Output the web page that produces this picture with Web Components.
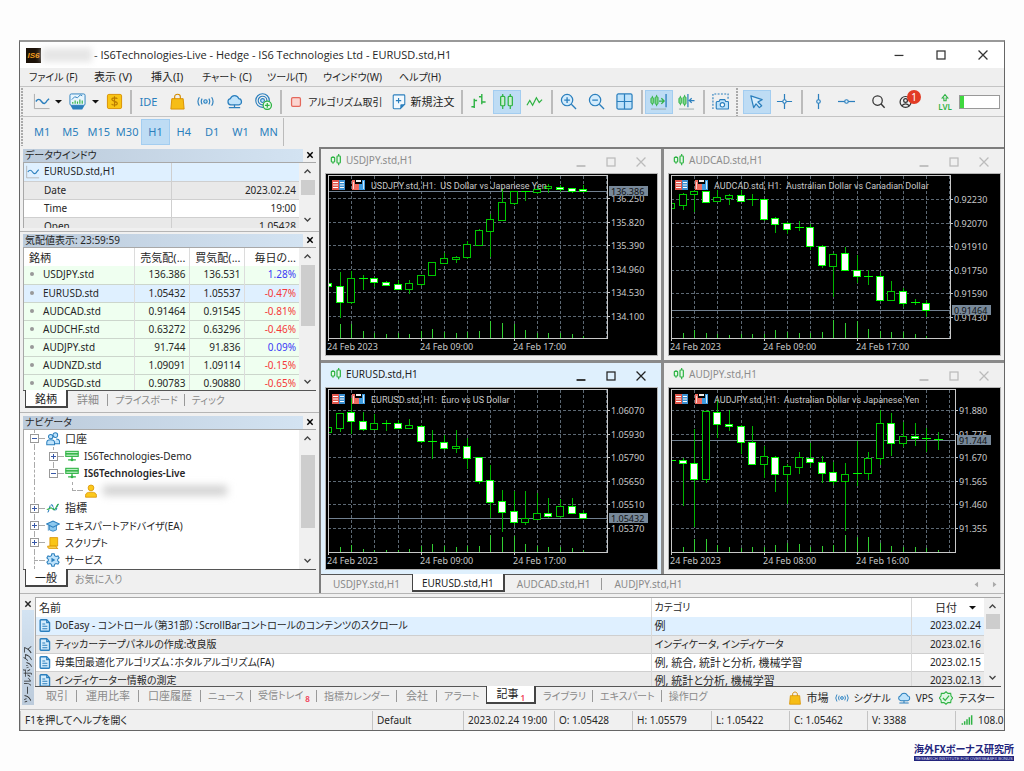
<!DOCTYPE html>
<html lang="ja">
<head>
<meta charset="utf-8">
<title>IS6Technologies-Live - Hedge - EURUSD.std,H1</title>
<style>
body{margin:0;background:#fdfdfd;font:10px/14px "Noto Sans","Noto Sans CJK JP",sans-serif;color:#262626}
</style>
</head>
<body>
<trade-terminal></trade-terminal>
<script>
const BASE = `<style>
*{box-sizing:border-box}
:host{display:block}
button,a,input{font:inherit;color:inherit;background:none;border:0;margin:0;padding:0;text-decoration:none;white-space:nowrap}
table{border-collapse:collapse;table-layout:fixed;width:100%}
th,td{font-weight:400;padding:0;white-space:nowrap;overflow:hidden}
.ja{font-size:11px;font-feature-settings:"palt"}
.kana{font-size:10px;font-feature-settings:"palt"}
</style>`;
function define(name, html, setup) {
  const t = document.createElement('template');
  t.innerHTML = BASE + html;
  customElements.define(name, class extends HTMLElement {
    constructor() {
      super();
      this.attachShadow({ mode: 'open' }).append(t.content.cloneNode(true));
    }
    connectedCallback() { if (setup) setup(this, this.shadowRoot); }
  });
}

/* ---------- icons, all on an 18 x 18 grid ---------- */
const B = '#2b7fbd', L = '#bfe3fb', G = '#2fb344';
const ICONS = {
  axis: `<path d="M1.500 1v15.500h16" stroke="#aaa" fill="none"/><path d="M3 9c2-3 4-3 6 0s4 3 6-1l2-2" stroke="${B}" stroke-width="1.500" fill="none"/>`,
  report: `<rect x="1" y="1" width="16" height="12" rx="1.500" fill="#e8f5fd" stroke="${B}"/><path d="M1.500 13h15l-2.500 4.500h-10z" fill="${B}"/><path d="M3 7l3-3 3 1 3-3 2 1" stroke="${B}" fill="none"/><path d="M4 11.500v-2M6.500 11.500V8M9 11.500V9M11.500 11.500V7M14 11.500V8" stroke="${G}" stroke-width="1.200"/>`,
  dollar: `<rect x="1.500" y="1.500" width="15" height="15" rx="1.500" fill="#f9c515" stroke="#d99100"/><path d="M12 6.200c-.5-1.200-5.800-1.800-5.800.8 0 2.300 5.800 1.400 5.800 3.900 0 2.600-5.600 2.200-6 .5M9 3.500v11" stroke="#b97a00" fill="none" stroke-width="1.200"/>`,
  bag: `<path d="M6 7V4c0-3.500 6-3.500 6 0v3" stroke="#d18a00" fill="none" stroke-width="1.200"/><path d="M3 6h12l1 11H2z" fill="#f6bd16" stroke="#d99100"/>`,
  signal: `<g stroke="${B}" fill="none" stroke-width="1.200"><circle cx="9" cy="9" r="1.800" fill="${L}"/><path d="M5.500 6q-2 3 0 6M12.500 6q2 3 0 6M2.500 4.500q-3 4.500 0 9M15.500 4.500q3 4.500 0 9"/></g>`,
  cloud: `<path d="M5 12.500a3.300 3.300 0 0 1-.3-6.500 4.600 4.600 0 0 1 8.800 0 3.300 3.300 0 0 1 .3 6.500z" fill="${L}" stroke="${B}" stroke-width="1.300"/><path d="M9 12.500v3M3 15.500h12" stroke="${B}" stroke-width="1.300"/>`,
  radar: `<g fill="none" stroke="${B}" stroke-width="1.200"><circle cx="8" cy="8" r="7.200"/><circle cx="8" cy="8" r="4.600"/><circle cx="8" cy="8" r="2" fill="${L}"/></g><circle cx="13" cy="13" r="4.400" fill="#eaf8ec" stroke="${G}" stroke-width="1.300"/><path d="M13 10.500v5M10.500 13h5" stroke="${G}" stroke-width="1.300"/>`,
  stop: `<rect x="4" y="4" width="10" height="10" rx="1.500" fill="#fbd5d0" stroke="#e4685c" stroke-width="1.400"/>`,
  order: `<path d="M3.500 1h11q1 0 1 1v9.500l-5 5h-7q-1 0-1-1V2q0-1 1-1z" fill="#f2f9fe" stroke="${B}" stroke-width="1.200"/><path d="M15.500 11.500l-5 5v-4q0-1 1-1z" fill="${B}"/><path d="M8.500 4.500v6M5.500 7.500h6" stroke="${B}" stroke-width="1.300"/>`,
  bars: `<path d="M4.500 6v10M1.500 14.500h3M4.500 8h3M12.500 1v11M9.500 4h3M12.500 9.500h4" stroke="${G}" stroke-width="1.500" fill="none"/>`,
  candles: `<g stroke="${G}" stroke-width="1.300" fill="#c9efcf"><path d="M5 1v16M13 1v16"/><rect x="2.800" y="3.500" width="4.400" height="10" rx="1"/><rect x="10.800" y="3.500" width="4.400" height="10" rx="1"/></g>`,
  pair: `<g stroke="${G}" stroke-width="1.800" fill="#e8f9ea"><path d="M4.500 3.500v11M13 0v17"/><rect x="2" y="5" width="5" height="7" rx="1"/><rect x="10.500" y="3" width="5" height="10.500" rx="1"/></g>`,
  zig: `<path d="M1 13l3-5 3 5 4-8 3 5 3-3" stroke="${G}" stroke-width="1.300" fill="none"/>`,
  zin: `<circle cx="7.500" cy="7.500" r="6" fill="#d4ecfc" stroke="${B}" stroke-width="1.300"/><path d="M12 12l5 5M4.500 7.500h6M7.500 4.500v6" stroke="${B}" stroke-width="1.400"/>`,
  zout: `<circle cx="7.500" cy="7.500" r="6" fill="#d4ecfc" stroke="${B}" stroke-width="1.300"/><path d="M12 12l5 5M4.500 7.500h6" stroke="${B}" stroke-width="1.400"/>`,
  tiles: `<rect x="1" y="1" width="16" height="16" rx="1.500" fill="${L}" stroke="${B}" stroke-width="1.300"/><path d="M9 1v16M1 9h16" stroke="${B}" stroke-width="1.300"/>`,
  scroll: `<g stroke="${G}" fill="#7fd48b"><path d="M2.500 3v10M7 2v12"/><rect x="1" y="5" width="3" height="6" rx="1"/><rect x="5.500" y="4" width="3" height="8" rx="1"/></g><path d="M9.500 8.500h5M12 5.500l3 3-3 3" stroke="${G}" stroke-width="1.300" fill="none"/><path d="M17 1v14" stroke="${B}" stroke-width="1.400"/><path d="M1 17h16" stroke="#9aa"/>`,
  shift: `<g stroke="${G}" fill="#7fd48b"><path d="M2.500 3v10M7 2v12"/><rect x="1" y="5" width="3" height="6" rx="1"/><rect x="5.500" y="4" width="3" height="8" rx="1"/></g><path d="M10.500 1v14M17.500 8h-5M14.500 5.500L12 8l2.500 2.500" stroke="${B}" stroke-width="1.300" fill="none"/><path d="M1 17h16" stroke="#9aa"/>`,
  camera: `<path d="M1 17V1h16v5" fill="none" stroke="${B}" stroke-dasharray="2 1.500" stroke-width="1.200"/><path d="M5.500 9h2l1-2h5l1 2h2q1 0 1 1v6q0 1-1 1h-11q-1 0-1-1v-6q0-1 1-1z" fill="${L}" stroke="${B}" stroke-width="1.200"/><circle cx="11" cy="12.500" r="2.300" fill="#fff" stroke="${B}" stroke-width="1.200"/>`,
  cursor: `<path d="M3 3l12 4-4.500 2.500 4 4-2.500 2-3.500-4-2.500 4z" fill="#d7edfc" stroke="${B}" stroke-width="1.300" stroke-linejoin="round"/>`,
  cross: `<path d="M9 1v16M1 9h16" stroke="${B}" stroke-width="1.300"/><circle cx="9" cy="9" r="1.800" fill="#fff" stroke="${B}" stroke-width="1.200"/>`,
  vline: `<path d="M9 1v16" stroke="${B}" stroke-width="1.300"/><circle cx="9" cy="9" r="1.900" fill="#dff0fb" stroke="${B}" stroke-width="1.200"/>`,
  hline: `<path d="M0 9h18" stroke="${B}" stroke-width="1.300"/><circle cx="9" cy="9" r="1.900" fill="#dff0fb" stroke="${B}" stroke-width="1.200"/>`,
  search: `<circle cx="8" cy="8" r="5" fill="none" stroke="#333" stroke-width="1.300"/><path d="M11.500 11.500l4 4" stroke="#333" stroke-width="1.500"/>`,
  user: `<circle cx="8" cy="9.500" r="5.800" fill="none" stroke="#333" stroke-width="1.300"/><circle cx="8" cy="8" r="2" fill="none" stroke="#333" stroke-width="1.300"/><path d="M4 13.500q4-4 8 0" fill="none" stroke="#333" stroke-width="1.300"/>`,
  up: `<path d="M9 3l5 6h-3v5H7V9H4z" fill="none" stroke="${G}" stroke-width="2"/>`,
  people: `<g stroke="${B}" stroke-width="1.300" fill="${L}"><circle cx="12" cy="4" r="3"/><path d="M10 15h7.500v-2q0-4-4.500-4"/><circle cx="6" cy="6" r="2.800"/><path d="M1 16.500v-3q0-3.500 5-3.500t5 3.500v3z"/></g>`,
  server: `<g fill="#bdf0c6" stroke="${G}" stroke-width="1.400"><rect x="1" y="3" width="16" height="3"/><rect x="1" y="6.500" width="16" height="3"/></g><path d="M9 9.500v5M4 14h10" stroke="${G}" stroke-width="1.600"/><circle cx="9" cy="14" r="1.700" fill="${G}"/>`,
  person: `<g fill="#fbc81c" stroke="#d99100"><circle cx="9" cy="5" r="3.700"/><path d="M2 17v-2.500q0-4 7-4t7 4V17z"/></g>`,
  wave: `<path d="M2 14c2 1 2-9 5-9s2 8 5 7 1-7 5-8" stroke="${B}" fill="none" stroke-width="1.400" stroke-dasharray="4 1"/><path d="M1 11c3 0 4-3 6-2s3 4 5 1 2-5 4-6" stroke="${G}" fill="none" stroke-width="1.400"/>`,
  hat: `<path d="M4.500 8v6q4.500 3.500 9 0V8" fill="#8cc8ee" stroke="${B}"/><path d="M.8 6.500L9 2.500l8.200 4L9 10.500z" fill="#8cc8ee" stroke="${B}" stroke-width="1.300"/><path d="M3 8v7" stroke="${B}"/>`,
  script: `<path d="M5 2h10v11H5z" fill="#f9c515" stroke="#d99100"/><path d="M2 13h11q0 3 2.500 3H4q-2 0-2-3z" fill="#fbd34a" stroke="#d99100"/>`,
  gear: `<path d="M7.500 1h3l.6 2.500 1.800 1 2.500-.7 1.500 2.600L15 8.200v1.800l1.900 1.700-1.500 2.600-2.500-.7-1.800 1-.6 2.400h-3l-.6-2.400-1.800-1-2.500.7-1.500-2.600L3 10V8.200L1.100 6.400l1.500-2.600 2.500.7 1.800-1z" fill="${L}" stroke="${B}" stroke-width="1.300"/><path d="M7 6l5 3-5 3z" fill="${B}"/>`,
  doc: `<path d="M4 1h8l4 4v11q0 1-1 1H4q-1 0-1-1V2q0-1 1-1z" fill="#d4ecfc" stroke="${B}" stroke-width="1.900" stroke-linejoin="round"/><path d="M12 1v4h4M6 7h4M6 10h7M6 13.500h7" stroke="${B}" stroke-width="1.500" fill="none"/>`,
  tester: `<path d="M9 1l2.500 2 3.500 0 .5 3.500 2 2.500-2 2.500L15 15h-3.500L9 17l-2.500-2H3l-.5-3.500L.5 9l2-2.500L3 3h3.500z" fill="#dff7e3" stroke="${G}" stroke-width="1.400"/><path d="M5 9l3 3 5-6" fill="none" stroke="${G}" stroke-width="1.600"/>`,
  meter: `<path d="M2 16v-2M5.500 16v-5M9 16V8M12.500 16V5M16 16V2" stroke="${G}" stroke-width="2.200"/>`,
  caret: `<path d="M0 5h18l-9 9z" fill="#111"/>`,
  min: `<path d="M4 9.500h10" stroke="currentColor" stroke-width="1.400"/>`,
  low: `<path d="M4 13.500h10" stroke="currentColor" stroke-width="2"/>`,
  max: `<rect x="4.500" y="4.500" width="9" height="9" fill="none" stroke="currentColor" stroke-width="1.400"/>`,
  close: `<path d="M4 4l10 10M14 4L4 14" stroke="currentColor" stroke-width="1.400"/>`,
  shut: `<path d="M5 5l8 8M13 5l-8 8" stroke="currentColor" stroke-width="2.200"/>`,
  chevup: `<path d="M3 12l6-6 6 6" stroke="#444" stroke-width="2.600" fill="none"/>`,
  chevdown: `<path d="M3 6l6 6 6-6" stroke="#444" stroke-width="2.600" fill="none"/>`,
  left: `<path d="M13 2v14L4 9z" fill="#aaa"/>`, right: `<path d="M5 2v14l9-7z" fill="#aaa"/>`
};
define('ui-icon', `<style>:host{display:inline-block;width:16px;height:16px;flex:none}svg{display:block;width:100%;height:100%}</style><svg viewBox="0 0 18 18" aria-hidden="true"></svg>`,
  (el, r) => { r.querySelector('svg').innerHTML = ICONS[el.getAttribute('name')] || ''; });

define('tool-button', `<style>
:host{flex:0 0 28px;height:24px}
button{width:100%;height:100%;display:flex;align-items:center;justify-content:center;gap:4px;border:1px solid transparent;color:#2b7fbd}
:host([on]) button{background:#bedcf4;border-color:#a3cdf0}
:host([wide]){flex:none}
:host([wide]) button{color:#262626;padding:0 3px}
button ui-icon{width:17px;height:17px}
:host([wide]) button ui-icon{width:16px;height:16px}
</style><button type="button"><ui-icon></ui-icon><slot></slot></button>`, (el, r) => {
  const n = el.getAttribute('icon'), i = r.querySelector('ui-icon');
  if (!n) { i.remove(); return; }
  const c = document.createElement('ui-icon');
  c.setAttribute('name', n);
  if (n === 'caret') c.style.cssText = 'width:7px;height:7px';
  i.replaceWith(c);
  if (!el.textContent.trim()) r.querySelector('button').setAttribute('aria-label', n);
});

define('title-bar', `<style>
:host{display:flex;height:26px;align-items:center;background:#fff;padding-left:6px}
.logo{width:15px;height:15px;background:#1c1208;color:#f39a1c;font:italic bold 8px/15px "Liberation Sans",sans-serif;text-align:center}
.id{width:50px;height:14px;margin:0 2px 0 1px;background:#e6e6e6;filter:blur(3px)}
h1{font:11px/14px "Open Sans",sans-serif;margin:0;flex:1;white-space:nowrap}
button{width:42px;height:24px;display:flex;align-items:center;justify-content:center;color:#333}
</style><span class="logo">IS6</span><span class="id"></span>
<h1>- IS6Technologies-Live - Hedge - IS6 Technologies Ltd - EURUSD.std,H1</h1>
<button aria-label="最小化"><ui-icon name="min"></ui-icon></button><button aria-label="最大化"><ui-icon name="max"></ui-icon></button><button aria-label="閉じる"><ui-icon name="close"></ui-icon></button>`);

define('menu-bar', `<style>
:host{background:#efefef;height:19px;padding-left:9px;border-bottom:1px solid #c4c4c4}
nav{display:grid;grid-template-columns:65px 57px 51px 65px 56px 76px 60px;line-height:18px}
button{text-align:left}
</style><nav class="kana"><button>ファイル (F)</button><button class="ja">表示 (V)</button><button class="ja">挿入(I)</button><button>チャート (C)</button><button>ツール(T)</button><button>ウインドウ(W)</button><button>ヘルプ(H)</button></nav>`);

define('tool-bar', `<style>
:host{display:flex;align-items:center;height:30px;background:#f0f0f0;border-bottom:1px solid #c4c4c4}
.grip{width:7px;height:28px;margin-left:1px;background:radial-gradient(circle at 1px 1px,#aaa 1px,transparent 1px) 0 0/3px 3px repeat-y}
i{flex:none;width:2px;height:24px;margin:0 2px;background:#bbb}
.five{display:flex;width:144px}.five tool-button{flex:1}
.a{flex:0 0 26px}.c{flex:0 0 9px}
.sp{flex:1}
.user{position:relative;width:36px;display:flex;margin-right:3px}
.badge{position:absolute;left:15px;top:0;width:14px;height:14px;border-radius:7px;background:#e23b24;color:#fff;text-align:center;line-height:14px;font-size:10px}
.lvl{width:28px;display:flex;flex-direction:column;align-items:center;color:#2fb344;font-size:8px;line-height:8px;font-weight:600}
.lvl ui-icon{width:10px;height:10px}
.bat{width:41px;height:14px;margin-right:4px;border:1px solid #999;background:linear-gradient(90deg,#3fd83f 4px,#fff 4px)}
</style><span class="grip"></span>
<tool-button class="a" icon="axis"></tool-button><tool-button class="c" icon="caret"></tool-button>
<tool-button icon="report"></tool-button><tool-button class="c" icon="caret"></tool-button>
<tool-button icon="dollar"></tool-button><i></i>
<span class="five"><tool-button><span style="font-size:11px">IDE</span></tool-button><tool-button icon="bag"></tool-button><tool-button icon="signal"></tool-button><tool-button icon="cloud"></tool-button><tool-button icon="radar"></tool-button></span><i></i>
<tool-button wide icon="stop" class="kana">アルゴリズム取引</tool-button><tool-button wide icon="order" class="ja">新規注文</tool-button><i></i>
<tool-button icon="bars"></tool-button><tool-button on icon="candles"></tool-button><tool-button icon="zig"></tool-button><i></i>
<tool-button icon="zin"></tool-button><tool-button icon="zout"></tool-button><tool-button icon="tiles"></tool-button><i></i>
<tool-button on icon="scroll"></tool-button><tool-button icon="shift"></tool-button><i></i>
<tool-button icon="camera"></tool-button><span class="grip"></span>
<tool-button on icon="cursor"></tool-button><tool-button icon="cross"></tool-button><i></i>
<tool-button icon="vline"></tool-button><tool-button icon="hline"></tool-button><span class="sp"></span>
<tool-button icon="search"></tool-button><span class="user"><tool-button icon="user"></tool-button><span class="badge">1</span></span>
<span class="lvl"><ui-icon name="up"></ui-icon>LVL</span><span class="bat"></span>`);

define('time-frames', `<style>
:host{display:flex;align-items:center;height:30px;background:#f0f0f0}
.grip{width:7px;height:28px;margin-left:1px;background:radial-gradient(circle at 1px 1px,#aaa 1px,transparent 1px) 0 0/3px 3px repeat-y}
div{display:flex;width:255px;height:28px;align-items:center}div+i{width:1px;height:28px;background:#bbb}
tool-button{flex:1;height:26px;font-size:11px}
</style><span class="grip"></span><div></div><i></i>`, (el, r) => {
  r.querySelector('div').innerHTML = 'M1 M5 M15 M30 H1 H4 D1 W1 MN'.split(' ').map(t => `<tool-button${t === 'H1' ? ' on' : ''}>${t}</tool-button>`).join('');
});

define('scroll-rail', `<style>
:host{width:17px;flex:none;background:#f0f0f0;display:flex;flex-direction:column;align-items:center;padding:4px 0}
ui-icon{width:9px;height:9px}
b{width:14px;margin-top:var(--gap,4px);height:var(--thumb,15px);background:#cdcdcd}
ui-icon:last-child{margin-top:auto}
</style><ui-icon name="chevup"></ui-icon><b></b><ui-icon name="chevdown"></ui-icon>`);

define('tab-strip', `<style>:host{display:flex;height:19px;padding-left:var(--inset,2px);border-top:1px solid var(--line,#555)}</style><slot></slot>`);
define('tab-item', `<style>
:host{display:flex;flex:none;height:17px}
button{padding:0 var(--pad,9px);color:#8a8a8a;position:relative}
:host([kana]) button{padding:0 7px;font-size:10px}
:host([sep]) button::after{content:"";position:absolute;right:0;top:3px;height:12px;border-right:1px solid #999}
:host([selected]){height:18px;margin-top:-1px;background:#fff;border:solid #444;border-width:0 2px 2px 1px}
:host([selected]) button{color:#222;padding-top:1px}
sub{color:#f0364f;font-weight:600;font-size:8px;line-height:8px;vertical-align:-3px;margin-left:2px}
</style><button type="button" role="tab"><slot></slot></button>`, (el, r) => {
  const b = el.getAttribute('badge');
  if (b) { const s = document.createElement('sub'); s.textContent = b; r.querySelector('button').append(s); }
});

define('dock-panel', `<style>
:host{padding:1px 3px 3px;border-bottom:1px solid #b5b5b5;background:#f0f0f0}
header{display:flex;height:14px;align-items:center}
h2{flex:1;margin:0;font-weight:400;font-size:10px;line-height:13px;height:13px;padding-left:2px;background:linear-gradient(90deg,#bccbdb,#d3e3f2)}
header button{width:13px;height:13px;display:grid;place-items:center;color:#000}
header ui-icon{width:12px;height:12px}
.b{display:flex;border:solid #a8a8a8;border-width:1px 0 0 1px;height:var(--h);background:#fff;overflow:hidden}
.m{flex:1;min-width:0;overflow:hidden}
</style><header><h2 class="kana"><slot name="title"></slot></h2><button aria-label="閉じる"><ui-icon name="shut"></ui-icon></button></header>
<div class="b"><div class="m"><slot></slot></div><scroll-rail></scroll-rail></div><slot name="tabs"></slot>`);

define('data-window', `<style>
tr{height:18px;border-bottom:1px solid #cfcfcf}
td,th{line-height:17px;text-align:right;padding-right:3px}
th{text-align:left;padding-left:20px;border-right:1px solid #cfcfcf;position:relative}
th ui-icon{position:absolute;left:1px;top:2px;width:15px;height:14px}
tr:nth-child(even){background:#e9e9e9}tr:first-child{background:#dff0ff}
</style><table><colgroup><col style="width:147px"><col></colgroup>
<tr><th scope="row"><ui-icon name="axis"></ui-icon>EURUSD.std,H1</th><td></td></tr><tr><th scope="row">Date</th><td>2023.02.24</td></tr>
<tr><th scope="row">Time</th><td>19:00</td></tr><tr><th scope="row">Open</th><td>1.05428</td></tr></table>`);

define('market-watch', `<style>
tr{height:18px}tbody tr{background:#effff0;border-bottom:1px solid #ccd6cc}
td,th{line-height:17px;text-align:right;padding-right:3px;border-right:1px solid #dcdcdc}
td:last-child,th:last-child{border-right:0}
td:first-child,th:first-child{text-align:left}th:first-child{padding-left:5px}
tbody .sel{background:#dff0ff}.up{color:#3a3af5}.dn{color:#f53a3a}
td:first-child::before{content:"";display:inline-block;width:4px;height:4px;border-radius:2px;background:#999;margin:0 9px 2px 6px}
</style><table><colgroup><col><col style="width:55px"><col style="width:55px"><col style="width:55px"></colgroup>
<thead class="ja"><tr><th>銘柄</th><th>売気配(...</th><th>買気配(...</th><th>毎日の...</th></tr></thead><tbody></tbody></table>`, (el, r) => {
  r.querySelector('tbody').innerHTML = [
    ['USDJPY.std', '136.386', '136.531', '1.28%'], ['EURUSD.std', '1.05432', '1.05537', '-0.47%'],
    ['AUDCAD.std', '0.91464', '0.91545', '-0.81%'], ['AUDCHF.std', '0.63272', '0.63296', '-0.46%'],
    ['AUDJPY.std', '91.744', '91.836', '0.09%'], ['AUDNZD.std', '1.09091', '1.09114', '-0.15%'],
    ['AUDSGD.std', '0.90783', '0.90880', '-0.65%']
  ].map(([s, a, b, c], i) => `<tr${i === 1 ? ' class="sel"' : ''}><td>${s}</td><td>${a}</td><td>${b}</td><td class="${c[0] === '-' ? 'dn' : 'up'}">${c}</td></tr>`).join('');
});

define('nav-tree', `<style>
:host{height:100%}
ul{list-style:none;margin:0;padding:0;height:139px;display:flex;flex-direction:column}
li{flex:1;display:flex;align-items:center;padding-left:calc(6px + var(--d,0) * 19px);position:relative}
li::before{content:"";position:absolute;left:calc(10px + var(--d,0) * 19px);top:0;bottom:0;border-left:1px dashed #aaa}
li.end::before{bottom:50%}
li.deep::after{content:"";position:absolute;left:10px;top:0;bottom:0;border-left:1px dashed #aaa}
u{width:9px;height:9px;border:1px solid #999;background:#fff;position:relative;flex:none;z-index:1}
u::before{content:"";position:absolute;left:1px;right:1px;top:3px;border-top:1px solid #3758a8}
u.p::after{content:"";position:absolute;top:1px;bottom:1px;left:3px;border-left:1px solid #3758a8}
u.n{border-color:transparent;background:none}u.n::before{left:3px;right:0;border-top:1px dashed #aaa}
s{width:6px;border-top:1px dashed #aaa;margin-right:1px}
ui-icon{width:14px;height:14px;margin-right:5px}
.blur{width:124px;height:9px;background:#ccc;filter:blur(4px)}
b{font-weight:600}
</style><ul>
<li><u></u><s></s><ui-icon name="people"></ui-icon><span class="ja">口座</span></li>
<li style="--d:1" class="deep"><u class="p"></u><s></s><ui-icon name="server"></ui-icon>IS6Technologies-Demo</li>
<li style="--d:1" class="end deep"><u></u><s></s><ui-icon name="server"></ui-icon><b>IS6Technologies-Live</b></li>
<li style="--d:2" class="end deep"><u class="n"></u><s></s><ui-icon name="person"></ui-icon><span class="blur"></span></li>
<li><u class="p"></u><s></s><ui-icon name="wave"></ui-icon><span class="ja">指標</span></li>
<li><u class="p"></u><s></s><ui-icon name="hat"></ui-icon><span class="kana">エキスパートアドバイザ(EA)</span></li>
<li><u class="p"></u><s></s><ui-icon name="script"></ui-icon><span class="kana">スクリプト</span></li>
<li><u class="n"></u><s></s><ui-icon name="gear"></ui-icon><span class="kana">サービス</span></li></ul>`);

/* Candles: high, low, body top, body bottom, 1 when the bar closed lower, tick volume. */
const CHARTS = {
  USDJPY: { name: 'US Dollar vs Japanese Yen', right: 281, tick: 24, labels: ['136.250', '135.820', '135.390', '134.960', '134.530', '134.100'], price: ['136.386', 17], times: ['09:00', '17:00'],
    bars: '109,113,109,112,1,0 98,144,112,128,1,14 97,130,104,128,0,14 101,116,104,105,0,7 103,113,104,108,1,5 107,111,108,111,1,4 106,116,110,115,1,5 106,120,109,115,0,4 101,112,101,110,0,7 88,101,88,101,0,9 79,90,84,89,0,6 82,89,83,85,0,5 67,85,70,83,0,6 55,71,56,71,0,7 40,83,45,57,0,17 15,46,28,46,0,15 17,31,17,29,0,14 17,27,17,18,0,8 12,20,15,18,0,5 10,19,12,14,0,5 11,18,13,15,1,5 14,19,14,17,1,4 11,18,15,17,1,2' },
  AUDCAD: { name: 'Australian Dollar vs Canadian Dollar', right: 281, tick: 25, labels: ['0.92230', '0.92070', '0.91910', '0.91750', '0.91590', '0.91430'], price: ['0.91464', 136], times: ['09:00', '17:00'],
    bars: '29,34,29,34,0,0 19,36,20,31,0,5 16,38,17,20,0,8 17,28,17,28,1,5 16,28,23,27,0,4 20,31,21,24,0,3 16,27,21,27,1,4 20,32,25,26,0,4 25,47,25,45,1,4 43,59,44,50,1,8 48,60,49,55,1,6 47,57,53,54,0,5 50,76,53,72,1,5 71,94,72,91,1,6 79,123,80,92,0,18 73,97,79,96,1,15 81,109,96,102,1,17 96,111,102,103,0,9 98,127,102,126,1,7 107,126,117,126,0,6 114,133,117,129,1,6 125,131,128,129,0,4 126,143,129,136,1,2' },
  EURUSD: { name: 'Euro vs US Dollar', right: 281, tick: 22, labels: ['1.06070', '1.05930', '1.05790', '1.05650', '1.05510', '1.05370'], price: ['1.05432', 130], times: ['09:00', '17:00'],
    bars: '39,44,39,44,0,0 25,44,25,40,0,5 10,46,24,33,1,7 24,43,33,41,1,3 26,41,35,41,0,2 32,43,35,36,0,2 32,40,35,40,1,2 31,41,37,40,0,3 37,55,38,53,1,6 42,71,53,54,0,8 47,62,54,60,1,6 42,65,58,60,0,5 50,81,58,70,1,6 69,96,69,93,1,6 77,130,92,114,1,17 102,144,113,124,1,15 103,137,123,134,1,16 103,137,130,134,0,8 105,132,125,131,0,6 110,130,125,128,1,5 111,130,118,128,0,5 110,126,118,125,1,4 122,131,125,130,1,2' },
  AUDJPY: { name: 'Australian Dollar vs Japanese Yen', right: 286, tick: 22, labels: ['91.880', '91.775', '91.670', '91.565', '91.460', '91.355'], price: ['91.744', 52], times: ['08:00', '16:00'],
    bars: '72,73,72,73,0,0 70,118,72,75,1,5 41,139,75,91,1,13 22,95,23,91,0,13 11,50,24,36,1,7 22,43,36,38,1,5 37,66,38,54,1,4 38,77,54,76,1,5 58,90,68,76,0,5 68,104,69,86,1,7 76,116,78,86,0,9 64,86,69,79,0,8 55,79,70,74,1,5 68,95,74,85,1,6 74,97,84,93,1,7 75,143,86,93,0,17 53,98,85,86,0,15 64,92,70,85,0,15 22,77,35,70,0,9 25,68,35,55,1,6 34,59,48,55,0,5 35,58,48,50,1,5 40,64,50,51,1,4 44,62,51,52,0,2' }
};
define('chart-window', `<style>
:host{background:#f0f0f0;padding:0 4px 5px 5px;min-width:0;color:#8c8c8c}
:host([active]){background:#dff0fd;color:#222}
header{display:flex;height:25px;align-items:center;padding-left:4px}
header>ui-icon{width:12px;height:12px;margin-bottom:4px}h3{flex:1;margin:0 0 0 4px;padding-bottom:4px;font:inherit}
button{width:30px;height:20px;display:grid;place-items:center;color:#bbb}
:host([active]) button{color:#222}
button ui-icon{width:16px;height:16px}
header button:last-child{margin-right:1px}
svg{display:block;width:100%;height:181px;background:#000;outline:1px solid #b5b5b5;font-size:9px}
.name{font-family:Roboto,sans-serif}
</style><header><ui-icon name="pair"></ui-icon><h3></h3><button aria-label="最小化"><ui-icon name="low"></ui-icon></button><button aria-label="最大化"><ui-icon name="max"></ui-icon></button><button aria-label="閉じる"><ui-icon name="close"></ui-icon></button></header><svg role="img"></svg>`, (el, r) => {
  const s = el.getAttribute('symbol'), c = CHARTS[s], R = c.right;
  r.querySelector('h3').textContent = s + '.std,H1';
  const X = k => Math.round(2 + 11.6 * k), rows = c.labels.map((t, i) => Math.round(c.tick + 23.5 * i));
  let g = '<g stroke="#5c6873" stroke-dasharray="3 2" shape-rendering="crispEdges">';
  for (let k = 2; X(k) < R; k += 2) g += `<path d="M${X(k) + .5} 2V164"/>`;
  rows.forEach(y => g += `<path d="M2 ${y + .5}H${R}"/>`);
  g += `</g><path d="M2 ${c.price[1] + .5}H${R}" stroke="#718090"/><g shape-rendering="crispEdges">`;
  c.bars.split(' ').forEach((b, k) => {
    const [h, l, t, m, d, v] = b.split(',').map(Number), x = X(k), w = k ? 4 : 0, h2 = Math.max(m - t, 1);
    if (v) g += `<rect x="${x}" y="${164 - v}" width="1" height="${v}" fill="#32cd32"/>`;
    g += `<rect x="${x}" y="${h}" width="1" height="${l - h}" fill="#00b400"/>`;
    if (m - t <= 1) g += `<rect x="${x - w}" y="${t}" width="${w + 5}" height="1" fill="#00ff00"/>`;
    else g += `<rect x="${x - w + .5}" y="${t + .5}" width="${w + 3}" height="${h2}" fill="${d ? '#fff' : '#000'}" stroke="${d ? '#00ff00' : '#00c800'}"/>`;
  });
  g += `<rect x="2.500" y="1.500" width="${R - 2}" height="163" fill="none" stroke="#c8c8c8"/></g><g fill="#c8c8c8">`;
  rows.forEach((y, i) => g += `<path d="M${R} ${y + .5}h3" stroke="#c8c8c8"/><text x="${R + 4}" y="${y + 4}">${c.labels[i]}</text>`);
  g += `<path d="M2.500 164v3M95.500 164v3M188.500 164v3" stroke="#c8c8c8"/><text x="1" y="176">24 Feb 2023</text><text x="94" y="176">24 Feb ${c.times[0]}</text><text x="187" y="176">24 Feb ${c.times[1]}</text><text class="name" x="45" y="15" xml:space="preserve">${s}.std, H1:  ${c.name}</text></g>`;
  g += `<rect x="${R + 2}" y="${c.price[1] - 5}" width="${R > 281 ? 34 : 39}" height="10" fill="#778899"/><text x="${R + 4}" y="${c.price[1] + 4}" fill="#111">${c.price[0]}</text>`;
  g += '<path d="M6 6h7v10H6z" fill="#e0574c"/><path d="M13 6h6v10h-6z" fill="#3c8fd0"/><path d="M7 8.500h5M7 11h5M7 13.500h5M14 8.500h4M14 11h4M14 13.500h4" stroke="#fff"/><path d="M26 6h3v4h4v6h-7z" fill="#ee6b60"/><path d="M39 6h-3v4h-3v6h6z" fill="#3c9be0"/><path d="M30 6h5v2h-5z" fill="#eee"/><path d="M27.500 8v7" stroke="#fbd5d0"/><path d="M37.500 7v8" stroke="#cde8fb"/>';
  const svg = r.querySelector('svg'); svg.innerHTML = g; svg.setAttribute('aria-label', s);
});

define('chart-desk', `<style>
:host{border:solid #7d7d7d;border-width:2px 0 0 2px;background:#f0f0f0;min-width:0}
.g{display:grid;grid-template-columns:1fr 1fr;gap:3px;background:#8a8a8a}
.t{display:flex;border-top:1px solid #555}
tab-strip{flex:1;height:18px;--inset:0px;--line:transparent;margin-top:-1px}
.t ui-icon{width:7px;height:7px;margin:6px 6px 0 5px}
</style><div class="g"><chart-window symbol="USDJPY"></chart-window><chart-window symbol="AUDCAD"></chart-window><chart-window symbol="EURUSD" active></chart-window><chart-window symbol="AUDJPY"></chart-window></div>
<div class="t"><tab-strip style="--pad:12px"><tab-item>USDJPY.std,H1</tab-item><tab-item selected style="--pad:9px">EURUSD.std,H1</tab-item><tab-item sep>AUDCAD.std,H1</tab-item><tab-item>AUDJPY.std,H1</tab-item></tab-strip><ui-icon name="left"></ui-icon><ui-icon name="right"></ui-icon></div>`);

define('tool-box', `<style>
:host{display:flex;padding:3px 3px 4px 1px;border-top:1px solid #b5b5b5;border-bottom:1px solid #c4c4c4;background:#f0f0f0}
.side{width:14px;flex:none;display:flex;flex-direction:column;align-items:center}
.side button{height:13px}.side ui-icon{width:12px;height:12px;display:block}
h2{flex:1;width:12px;margin:0;padding-top:2px;font-weight:400;font-size:9px;line-height:12px;font-feature-settings:"palt";writing-mode:vertical-rl;text-orientation:sideways;transform:rotate(180deg);background:linear-gradient(180deg,#bccbdb,#d3e3f2);white-space:nowrap}
.main{flex:1;min-width:0}
.tb{display:flex;height:89px;background:#fff;border:solid #a8a8a8;border-width:1px 0 0 1px;overflow:hidden}
.tb>div{flex:1;overflow:hidden}
tr{height:18px}thead tr{height:19px}tbody tr{border-bottom:1px solid #cfcfcf}
th,td{text-align:left;line-height:17px;padding-left:3px;border-right:1px solid #d8d8d8}
td:first-child{padding-left:2px;font-size:10px}td ui-icon{width:13px;height:13px;vertical-align:-3px;margin-right:4px}
th:last-child,td:last-child{text-align:right;border-right:0;padding-right:3px;font-size:10px}
th:last-child{font-size:11px;padding-right:8px}th ui-icon{width:7px;height:7px;margin-left:12px;vertical-align:1px}
tbody tr:nth-child(even){background:#e9e9e9}tbody tr:first-child{background:#dff0ff}
.f{display:flex}tab-strip{flex:1}
.r{display:flex;align-items:center;border-top:1px solid #555;padding:4px 6px 0 0;gap:6px}
.r a{display:flex;align-items:center;gap:5px;height:14px;white-space:nowrap}.r ui-icon{width:14px;height:14px}
</style><div class="side"><button aria-label="閉じる"><ui-icon name="shut"></ui-icon></button><h2>ツールボックス</h2></div>
<div class="main"><div class="tb"><div class="ja"><table><colgroup><col><col style="width:260px"><col style="width:73px"></colgroup>
<thead><tr><th>名前</th><th class="kana">カテゴリ</th><th>日付<ui-icon name="caret"></ui-icon></th></tr></thead>
<tbody><tr><td><ui-icon name="doc"></ui-icon>DoEasy - コントロール（第31部）：ScrollBarコントロールのコンテンツのスクロール</td><td>例</td><td>2023.02.24</td></tr>
<tr><td><ui-icon name="doc"></ui-icon>ティッカーテープパネルの作成:改良版</td><td class="kana">インディケータ, インディケータ</td><td>2023.02.16</td></tr>
<tr><td><ui-icon name="doc"></ui-icon>母集団最適化アルゴリズム：ホタルアルゴリズム(FA)</td><td>例, 統合, 統計と分析, 機械学習</td><td>2023.02.15</td></tr>
<tr><td><ui-icon name="doc"></ui-icon>インディケーター情報の測定</td><td>例, 統計と分析, 機械学習</td><td>2023.02.13</td></tr></tbody></table></div><scroll-rail style="--gap:3px"></scroll-rail></div>
<div class="f"><tab-strip class="ja" role="tablist"><tab-item sep>取引</tab-item><tab-item sep>運用比率</tab-item><tab-item sep>口座履歴</tab-item><tab-item kana sep>ニュース</tab-item><tab-item kana sep badge="8">受信トレイ</tab-item><tab-item kana sep>指標カレンダー</tab-item><tab-item sep>会社</tab-item><tab-item kana>アラート</tab-item><tab-item selected badge="1">記事</tab-item><tab-item kana sep>ライブラリ</tab-item><tab-item kana sep>エキスパート</tab-item><tab-item kana>操作ログ</tab-item></tab-strip>
<div class="r ja"><a href="#"><ui-icon name="bag"></ui-icon>市場</a><a href="#" class="kana"><ui-icon name="signal"></ui-icon>シグナル</a><a href="#" class="kana"><ui-icon name="cloud"></ui-icon>VPS</a><a href="#" class="kana"><ui-icon name="tester"></ui-icon>テスター</a></div></div></div>`);

define('status-bar', `<style>
:host{display:grid;grid-template-columns:1fr 91px 91px 78px 79px 78px 78px 88px 49px;height:20px;background:#f0f0f0;line-height:18px;padding-top:1px}
span{padding-left:4px;border-left:1px solid #c4c4c4;white-space:nowrap;overflow:hidden}
span:first-child{padding-left:1px;border:0}ui-icon{width:14px;height:12px;vertical-align:-2px;margin-right:4px}
</style><span class="kana">F1を押してヘルプを開く</span><span>Default</span><span>2023.02.24 19:00</span><span>O: 1.05428</span><span>H: 1.05579</span><span>L: 1.05422</span><span>C: 1.05462</span><span>V: 3388</span><span><ui-icon name="meter"></ui-icon>108.0</span>`);

define('site-mark', `<style>
:host{display:flex;flex-direction:column;align-items:flex-end;padding:10px 10px 0;color:#22247c}
b{font:bold 10px/15px "Noto Sans CJK JP",sans-serif;font-feature-settings:"palt"}
small{background:#22247c;color:#dde;font:4px/5px "Liberation Sans",sans-serif;width:100px;text-align:center;white-space:nowrap}
</style><b>海外FXボーナス研究所</b><small>RESEARCH INSTITUTE FOR OVERSEASFX BONUS</small>`);

define('trade-terminal', `<style>
:host{padding-top:40px}
main{margin:0 19px;border:1px solid #666;border-top:2px solid #999;background:#f0f0f0}
.w{display:grid;grid-template-columns:299px 1fr}
dock-panel:last-child{border-bottom:0;padding:2px 3px 5px}
</style><main><title-bar></title-bar><menu-bar></menu-bar><tool-bar></tool-bar><time-frames></time-frames>
<div class="w"><div>
<dock-panel style="--h:66px"><span slot="title">データウインドウ</span><data-window></data-window></dock-panel>
<dock-panel style="--h:143px;--thumb:61px"><span slot="title">気配値表示: 23:59:59</span><market-watch></market-watch><tab-strip slot="tabs" class="ja"><tab-item selected>銘柄</tab-item><tab-item sep>詳細</tab-item><tab-item kana sep>プライスボード</tab-item><tab-item kana>ティック</tab-item></tab-strip></dock-panel>
<dock-panel style="--h:140px;--gap:12px;--thumb:73px"><span slot="title">ナビゲータ</span><nav-tree></nav-tree><tab-strip slot="tabs" class="ja"><tab-item selected>一般</tab-item><tab-item kana>お気に入り</tab-item></tab-strip></dock-panel>
</div><chart-desk></chart-desk></div><tool-box></tool-box><status-bar></status-bar></main><site-mark></site-mark>`);
</script>
</body>
</html>
